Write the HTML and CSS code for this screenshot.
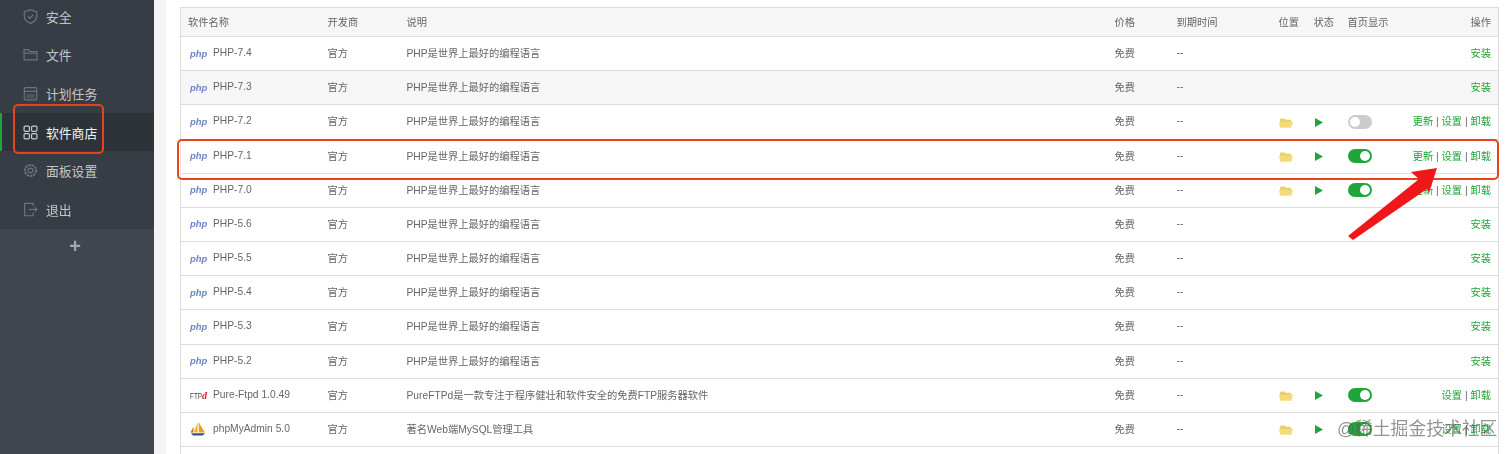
FILE: index.html
```html
<!DOCTYPE html>
<html lang="zh-CN">
<head>
<meta charset="utf-8">
<title>软件商店</title>
<link rel="stylesheet" href="styles.css">
</head>
<body>
<div class="app">
  <aside class="sidebar">
    <nav class="menu">
      <a class="item"><svg class="mi" viewBox="0 0 14 14"><path d="M7 .8 12.800 2.600V7c0 3-2.500 5-5.800 6.400C3.700 12 1.200 10 1.200 7V2.600Z"/><path d="M4.500 6.800 6.500 8.800 9.700 5.300"/></svg><span>安全</span></a>
      <a class="item"><svg class="mi" viewBox="0 0 14 14"><path d="M1 12V2.500H5L6.500 4.200H13V12Z"/><path d="M1 5.800H13"/></svg><span>文件</span></a>
      <a class="item"><svg class="mi" viewBox="0 0 14 14"><rect x="1.200" y="1.500" width="11.600" height="11.500" rx="1"/><path d="M1.200 5H12.800"/><path class="dim" d="M3 7.500H11V11.500H3Z"/></svg><span>计划任务</span></a>
      <a class="item active"><svg class="mi" viewBox="0 0 14 14"><rect x="1" y="1" width="5" height="5" rx="1"/><rect x="8" y="1" width="5" height="5" rx="1"/><rect x="1" y="8" width="5" height="5" rx="1"/><rect x="8" y="8" width="5" height="5" rx="1"/></svg><span>软件商店</span></a>
      <a class="item"><svg class="mi" viewBox="0 0 14 14"><circle cx="7" cy="7" r="2.200"/><circle cx="7" cy="7" r="5.200" stroke-width="1.800" stroke-dasharray="2.200 .9"/></svg><span>面板设置</span></a>
      <a class="item"><svg class="mi" viewBox="0 0 14 14"><path d="M9.500 4V1.200H1.500V12.800H9.500V10"/><path d="M5.500 7H13M11 5 13 7 11 9"/></svg><span>退出</span></a>
    </nav>
    <div class="plus">+</div>
  </aside>
  <main class="content">
    <table class="soft">
      <colgroup>
        <col class="c-name"><col class="c-dev"><col class="c-desc"><col class="c-price"><col class="c-exp"><col class="c-pos"><col class="c-state"><col class="c-home"><col class="c-op">
      </colgroup>
      <thead>
        <tr><th>软件名称</th><th>开发商</th><th>说明</th><th>价格</th><th>到期时间</th><th>位置</th><th>状态</th><th>首页显示</th><th class="op">操作</th></tr>
      </thead>
      <tbody>
        <tr><td><span class="nm"><svg class="logo" viewBox="0 0 18 10"><text class="phpmark" x="0" y="8">php</text></svg>PHP-7.4</span></td><td>官方</td><td>PHP是世界上最好的编程语言</td><td>免费</td><td>--</td><td></td><td></td><td></td><td class="op"><a>安装</a></td></tr>
        <tr class="alt"><td><span class="nm"><svg class="logo" viewBox="0 0 18 10"><text class="phpmark" x="0" y="8">php</text></svg>PHP-7.3</span></td><td>官方</td><td>PHP是世界上最好的编程语言</td><td>免费</td><td>--</td><td></td><td></td><td></td><td class="op"><a>安装</a></td></tr>
        <tr><td><span class="nm"><svg class="logo" viewBox="0 0 18 10"><text class="phpmark" x="0" y="8">php</text></svg>PHP-7.2</span></td><td>官方</td><td>PHP是世界上最好的编程语言</td><td>免费</td><td>--</td><td><svg class="folder" viewBox="0 0 14 10"><path class="fb" d="M1 1.500 2 .5H5.500L6.500 1.800H12V4H1Z"/><path class="ff" d="M0 3.800H14L12.300 9.800H1.200Z"/></svg></td><td><svg class="play" viewBox="0 0 8 9"><path d="M0 0 8 4.500 0 9Z"/></svg></td><td><span class="sw"></span></td><td class="op"><a>更新</a> | <a>设置</a> | <a>卸载</a></td></tr>
        <tr><td><span class="nm"><svg class="logo" viewBox="0 0 18 10"><text class="phpmark" x="0" y="8">php</text></svg>PHP-7.1</span></td><td>官方</td><td>PHP是世界上最好的编程语言</td><td>免费</td><td>--</td><td><svg class="folder" viewBox="0 0 14 10"><path class="fb" d="M1 1.500 2 .5H5.500L6.500 1.800H12V4H1Z"/><path class="ff" d="M0 3.800H14L12.300 9.800H1.200Z"/></svg></td><td><svg class="play" viewBox="0 0 8 9"><path d="M0 0 8 4.500 0 9Z"/></svg></td><td><span class="sw on"></span></td><td class="op"><a>更新</a> | <a>设置</a> | <a>卸载</a></td></tr>
        <tr><td><span class="nm"><svg class="logo" viewBox="0 0 18 10"><text class="phpmark" x="0" y="8">php</text></svg>PHP-7.0</span></td><td>官方</td><td>PHP是世界上最好的编程语言</td><td>免费</td><td>--</td><td><svg class="folder" viewBox="0 0 14 10"><path class="fb" d="M1 1.500 2 .5H5.500L6.500 1.800H12V4H1Z"/><path class="ff" d="M0 3.800H14L12.300 9.800H1.200Z"/></svg></td><td><svg class="play" viewBox="0 0 8 9"><path d="M0 0 8 4.500 0 9Z"/></svg></td><td><span class="sw on"></span></td><td class="op"><a>更新</a> | <a>设置</a> | <a>卸载</a></td></tr>
        <tr><td><span class="nm"><svg class="logo" viewBox="0 0 18 10"><text class="phpmark" x="0" y="8">php</text></svg>PHP-5.6</span></td><td>官方</td><td>PHP是世界上最好的编程语言</td><td>免费</td><td>--</td><td></td><td></td><td></td><td class="op"><a>安装</a></td></tr>
        <tr><td><span class="nm"><svg class="logo" viewBox="0 0 18 10"><text class="phpmark" x="0" y="8">php</text></svg>PHP-5.5</span></td><td>官方</td><td>PHP是世界上最好的编程语言</td><td>免费</td><td>--</td><td></td><td></td><td></td><td class="op"><a>安装</a></td></tr>
        <tr><td><span class="nm"><svg class="logo" viewBox="0 0 18 10"><text class="phpmark" x="0" y="8">php</text></svg>PHP-5.4</span></td><td>官方</td><td>PHP是世界上最好的编程语言</td><td>免费</td><td>--</td><td></td><td></td><td></td><td class="op"><a>安装</a></td></tr>
        <tr><td><span class="nm"><svg class="logo" viewBox="0 0 18 10"><text class="phpmark" x="0" y="8">php</text></svg>PHP-5.3</span></td><td>官方</td><td>PHP是世界上最好的编程语言</td><td>免费</td><td>--</td><td></td><td></td><td></td><td class="op"><a>安装</a></td></tr>
        <tr><td><span class="nm"><svg class="logo" viewBox="0 0 18 10"><text class="phpmark" x="0" y="8">php</text></svg>PHP-5.2</span></td><td>官方</td><td>PHP是世界上最好的编程语言</td><td>免费</td><td>--</td><td></td><td></td><td></td><td class="op"><a>安装</a></td></tr>
        <tr><td><span class="nm"><svg class="logo" viewBox="0 0 18 10"><text class="ftpmark" x="0" y="9" textLength="12" lengthAdjust="spacingAndGlyphs">FTP</text><text class="ftpd" x="12" y="9">d</text></svg>Pure-Ftpd 1.0.49</span></td><td>官方</td><td>PureFTPd是一款专注于程序健壮和软件安全的免费FTP服务器软件</td><td>免费</td><td>--</td><td><svg class="folder" viewBox="0 0 14 10"><path class="fb" d="M1 1.500 2 .5H5.500L6.500 1.800H12V4H1Z"/><path class="ff" d="M0 3.800H14L12.300 9.800H1.200Z"/></svg></td><td><svg class="play" viewBox="0 0 8 9"><path d="M0 0 8 4.500 0 9Z"/></svg></td><td><span class="sw on"></span></td><td class="op"><a>设置</a> | <a>卸载</a></td></tr>
        <tr><td><span class="nm"><svg class="logo tall" viewBox="0 0 16 16"><path fill="#e8a020" d="M8.500 1 9 11.500H15Z"/><path fill="#f2b730" d="M7.500 1.500 7.800 11.500H3.500Z"/><path fill="#c9771a" d="M3.500 5.500 3.300 11.500H.5Z"/><path fill="#3d4f8a" d="M1 12.300H15L12.800 14.500H3Z"/></svg>phpMyAdmin 5.0</span></td><td>官方</td><td>著名Web端MySQL管理工具</td><td>免费</td><td>--</td><td><svg class="folder" viewBox="0 0 14 10"><path class="fb" d="M1 1.500 2 .5H5.500L6.500 1.800H12V4H1Z"/><path class="ff" d="M0 3.800H14L12.300 9.800H1.200Z"/></svg></td><td><svg class="play" viewBox="0 0 8 9"><path d="M0 0 8 4.500 0 9Z"/></svg></td><td><span class="sw on"></span></td><td class="op"><a>设置</a> | <a>卸载</a></td></tr>
        <tr class="cut"><td colspan="9"></td></tr>
      </tbody>
    </table>
  </main>
</div>
<div class="mark mark-menu"></div>
<div class="mark mark-row"></div>
<svg class="arrow" viewBox="0 0 100 85"><path d="M97 8 71 12 79 19 8 76 13 80 87 29 89 33Z"/></svg>
<div class="wm">@稀土掘金技术社区</div>
</body>
</html>
```
FILE: styles.css
```css
* { box-sizing: border-box; }
html, body { margin: 0; height: 454px; overflow: hidden; background: #fff; }
body {
  font-family: "Liberation Sans", "Noto Sans CJK SC", sans-serif;
  font-size: 10.250px;
  color: #666;
  position: relative;
}
.app { display: flex; height: 454px; filter: blur(.4px); }

.sidebar {
  width: 154px;
  flex: none;
  background: #3f464e;
  display: flex;
  flex-direction: column;
}
.menu { background: #373d45; margin-top: -3px; height: 232px; display: flex; flex-direction: column; }
.item {
  height: 38.600px;
  display: flex;
  align-items: center;
  gap: 8px;
  padding-left: 23px;
  font-size: 12.800px;
  color: #c3c6c9;
}
.item.active {
  background: #2e333a;
  color: #f2f3f4;
  box-shadow: inset 2px 0 0 #20a53a;
}
.mi { width: 15px; height: 15px; fill: none; stroke: #6f747a; stroke-width: 1.100; flex: none; }
.mi .dim { stroke: none; fill: #50555c; }
.active .mi { stroke: #c8cbce; }
.plus { text-align: center; color: #a3a7ab; font-size: 20px; line-height: 35px; margin-right: 4px; font-weight: 700; }

.content {
  flex: 1;
  min-width: 0;
  padding: 7px 14px 0 26px;
  background: linear-gradient(to right, #f4f4f4 12px, #fff 12px);
}
.soft {
  width: 1318px;
  table-layout: fixed;
  border-collapse: collapse;
  border: 1px solid #ddd;
  background: #fff;
}
.c-name { width: 140px; }
.c-dev { width: 79px; }
.c-desc { width: 708px; }
.c-price { width: 62px; }
.c-exp { width: 102px; }
.c-pos { width: 35px; }
.c-state { width: 34px; }
.c-home { width: 60px; }
.c-op { width: 98px; }

th, td { padding: 0 0 2px 7px; text-align: left; font-weight: 400; white-space: nowrap; border-bottom: 1px solid #ddd; }
th { height: 29px; background: #f6f6f6; }
td { height: 34.180px; }
.alt td { background: #f6f6f6; }
th.op, td.op { text-align: right; padding: 0 7px 2px 0; }
.op a { color: #20a53a; }
.cut td { height: 20px; border-bottom: 0; }

.nm { display: flex; align-items: center; gap: 5px; }
.logo { width: 18px; height: 10px; flex: none; margin: 2px 0 0 2px; }
.logo.tall { width: 16px; height: 16px; margin: 2px 2px 0 2px; }
.phpmark { font: italic 700 9.500px "Liberation Sans", sans-serif; fill: #6f86c4; }
.ftpmark { font: 400 9px "Liberation Sans", sans-serif; fill: #444; }
.ftpd { font: italic 700 10px "Liberation Serif", serif; fill: #d22; }
.folder { width: 14px; height: 10px; display: block; margin: 4px 0 0 0; }
.fb { fill: #e8cf6e; }
.ff { fill: #f3dc78; }
.play { width: 8px; height: 9px; display: block; margin: 3px 0 0 1px; }
.play path { fill: #20a53a; }
.sw {
  display: block;
  position: relative;
  width: 24px;
  height: 14px;
  margin: 2px 0 0 0;
  border-radius: 7px;
  background: #ccc;
}
.sw::after {
  content: "";
  position: absolute;
  left: 2px;
  top: 2px;
  width: 10px;
  height: 10px;
  border-radius: 50%;
  background: #fff;
}
.sw.on { background: #20a53a; }
.sw.on::after { left: 12px; }

.mark { position: absolute; border: 2px solid #e8431a; }
.mark-menu { left: 13px; top: 104px; width: 91px; height: 50px; border-radius: 5px; }
.mark-row { left: 177px; top: 139px; width: 1322px; height: 41px; border-radius: 5px; }
.arrow { position: absolute; left: 1340px; top: 160px; width: 100px; height: 85px; }
.arrow path { fill: #f0171b; }
.wm {
  position: absolute;
  left: 1337px;
  top: 417px;
  font-size: 17.800px;
  line-height: 24px;
  color: rgba(90, 90, 90, .65);
  white-space: nowrap;
}
```
